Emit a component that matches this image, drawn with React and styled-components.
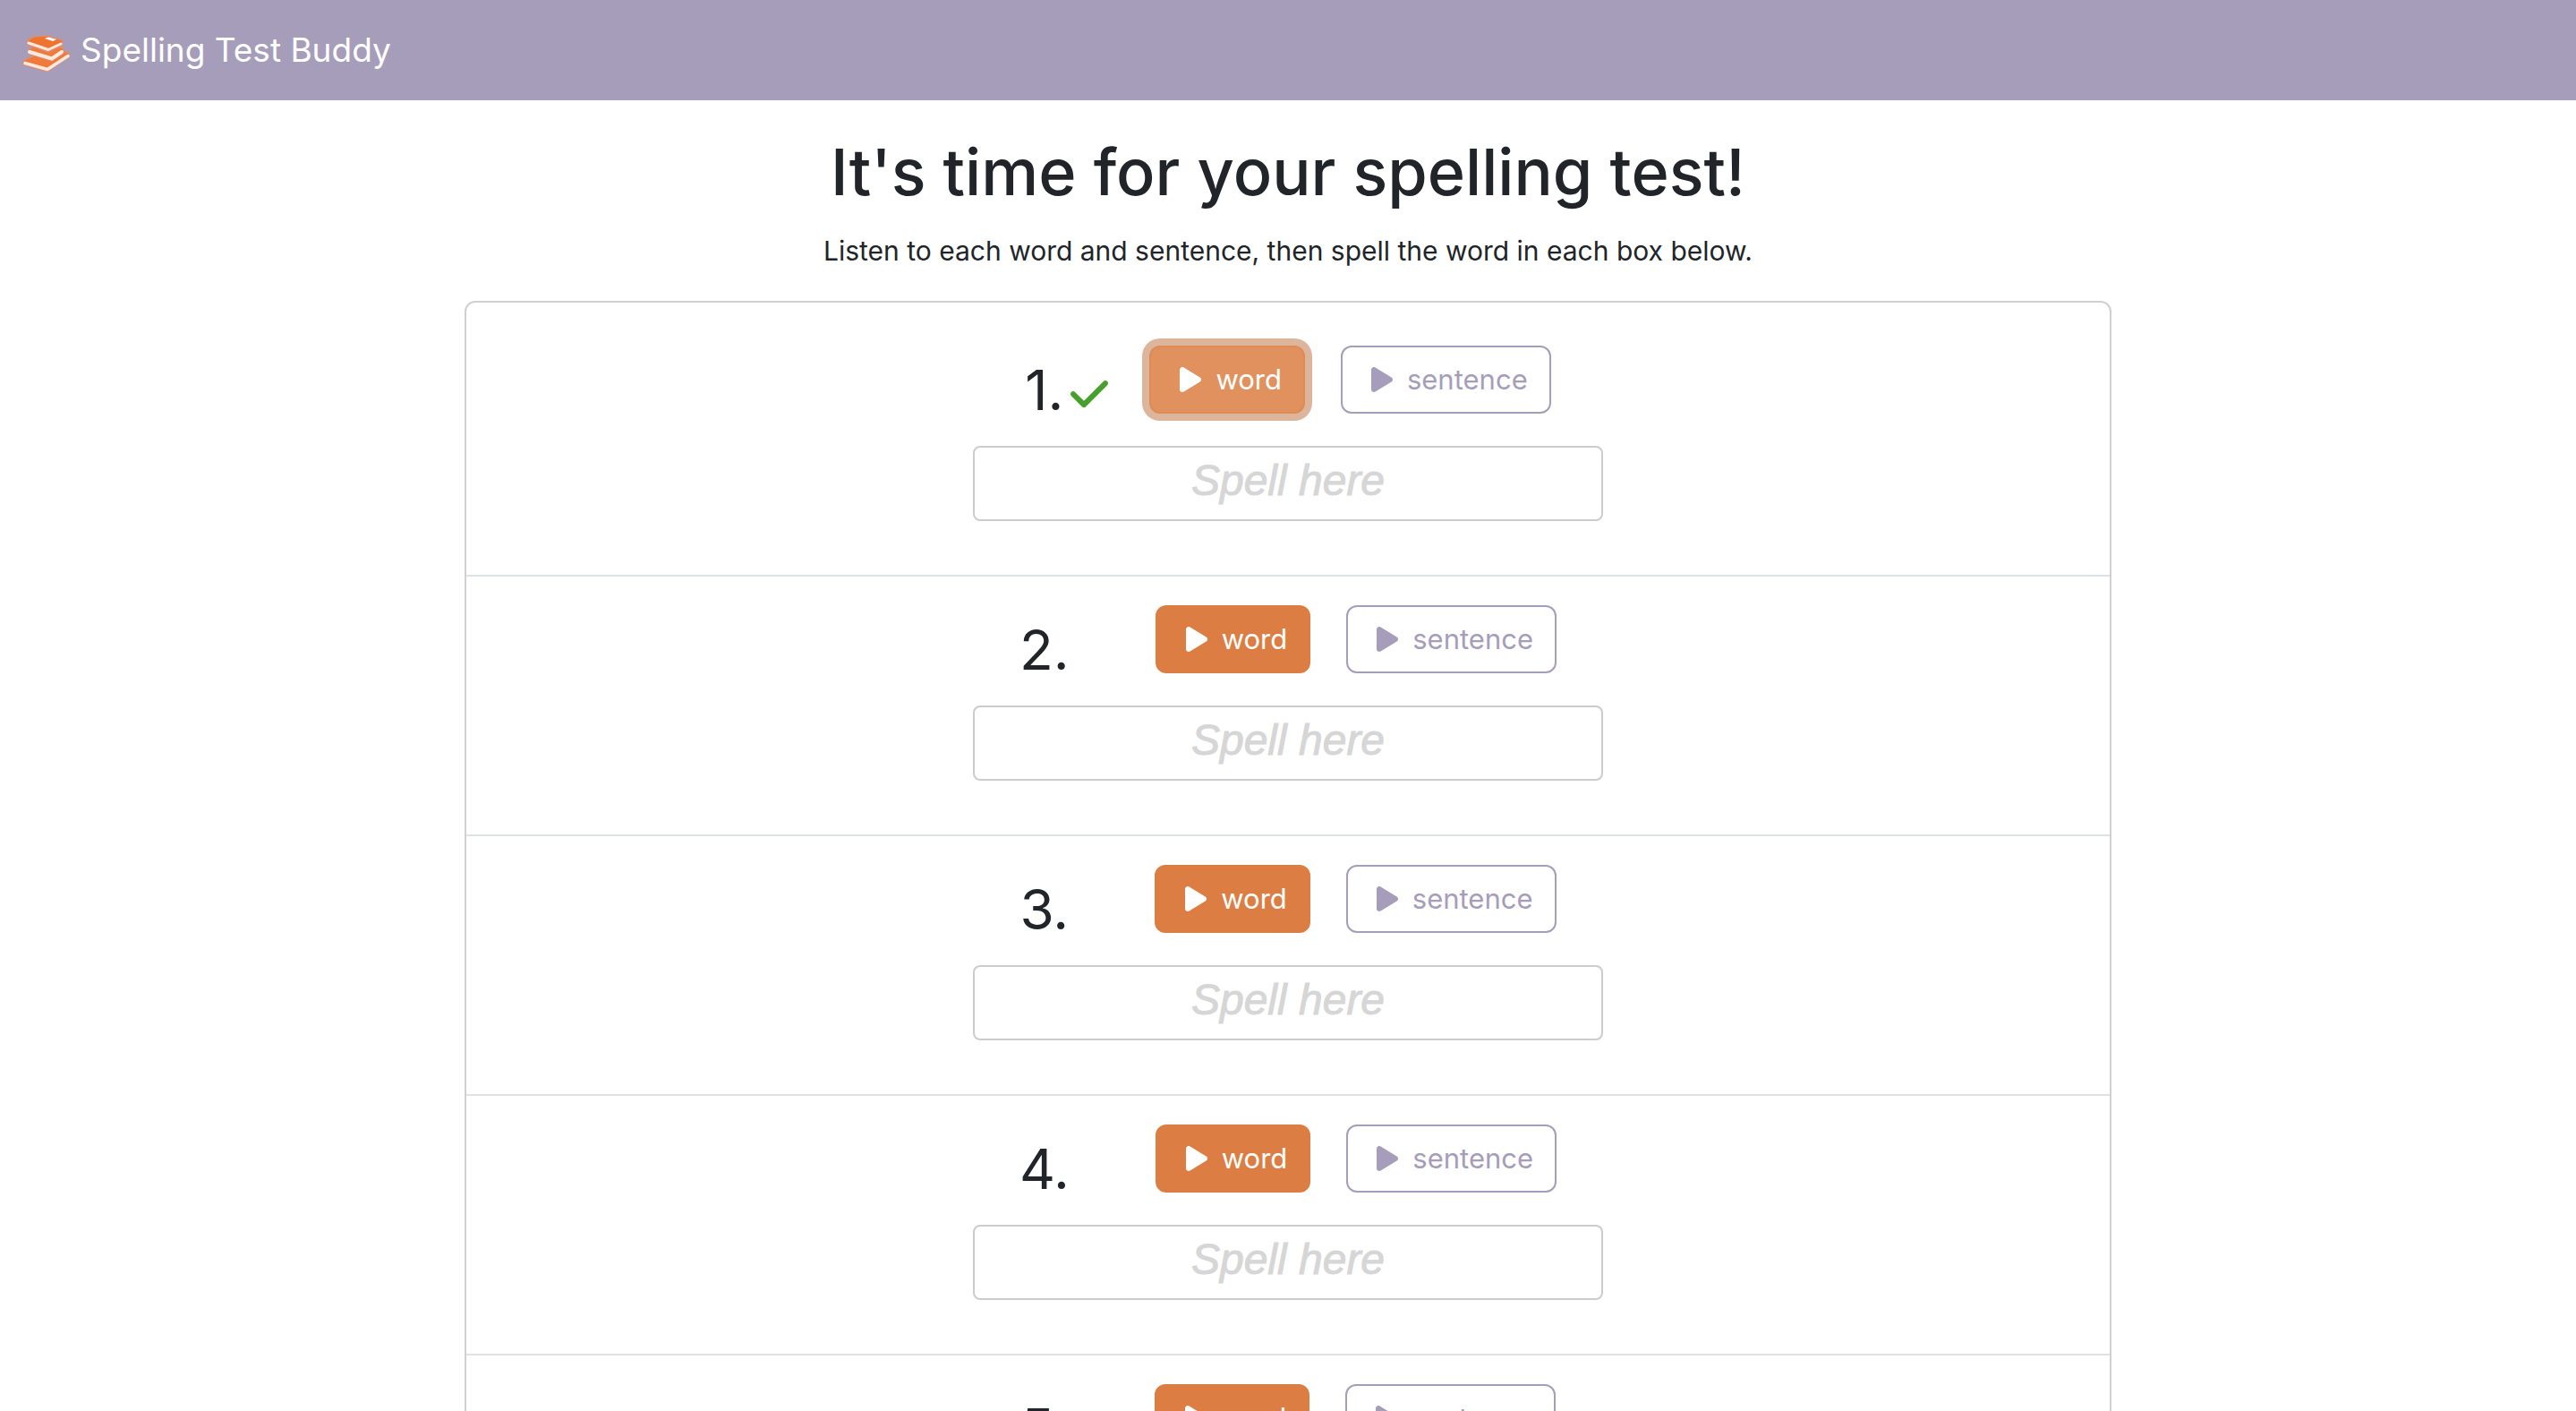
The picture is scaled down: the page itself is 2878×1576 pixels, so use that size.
import { useState } from "react";
import styled, { createGlobalStyle } from "styled-components";
import { FaCheck, FaPlay } from "react-icons/fa6";

const words = [1, 2, 3, 4, 5];

const Books = () => (
    <svg width="56" height="48" viewBox="0 0 56 48" fill="none" strokeLinejoin="round" strokeLinecap="round" aria-hidden="true">
        <path d="M2 32 L12 27 L46 21 L53 23 L53 28 L29 44 L2 36 Z" fill="#f0793c" stroke="#dd8d70" strokeWidth="1.5" />
        <path d="M4 34.5 L29 41.5 L52 26.5" stroke="#fdeadf" strokeWidth="3.5" />
        <path d="M8 20 L14 16 L42 16 L47 18 L46 24 L34 32 L8 24 Z" fill="#f0793c" stroke="#dd8d70" strokeWidth="1.5" />
        <path d="M9 22 L34 29.5 L45 22" stroke="#fdeadf" strokeWidth="4" />
        <path d="M7 9 L14 5 L28 4 L46 9 L45 15 L30 22 L7 14 Z" fill="#ee7432" stroke="#dd8d70" strokeWidth="1.5" />
        <path d="M8 12 L30 19.5 L44 13" stroke="#fdeadf" strokeWidth="3" />
        <path d="M26 7 L30 5.5 L39 8 L35 10 Z" fill="#ffffff" />
    </svg>
)

function SpellingRow({ number, done, focused }) {
    const [answer, setAnswer] = useState("");

    return (
        <Item>
            <Controls>
                <Label htmlFor={`word-${number}`}>{number}.</Label>
                <CheckSlot>{done && <FaCheck />}</CheckSlot>
                <Buttons>
                    <WordButton type="button" $focused={focused}>
                        <FaPlay />word
                    </WordButton>
                    <SentenceButton type="button">
                        <FaPlay />sentence
                    </SentenceButton>
                </Buttons>
            </Controls>
            <SpellInput
                id={`word-${number}`}
                type="text"
                placeholder="Spell here"
                autoComplete="off"
                value={answer}
                onChange={(e) => setAnswer(e.target.value)}
            />
        </Item>
    );
}

function App() {
    return (
        <>
            <GlobalStyle />
            <Navbar>
                <Brand href="#">
                    <Books />
                    Spelling Test Buddy
                </Brand>
            </Navbar>
            <Main>
                <Title>It's time for your spelling test!</Title>
                <Lead>Listen to each word and sentence, then spell the word in each box below.</Lead>
                <Card>
                    {words.map((n) => (
                        <SpellingRow key={n} number={n} done={n === 1} focused={n === 1} />
                    ))}
                </Card>
            </Main>
        </>
    );
}

const GlobalStyle = createGlobalStyle`
    * {
        box-sizing: border-box;
    }
    body {
        margin: 0;
        background: #fff;
        color: #212529;
        font-family: Inter, "Liberation Sans", sans-serif;
        font-size: 32px;
        line-height: 48px;
    }
`

const Navbar = styled.nav`
    display: flex;
    align-items: center;
    height: 112px;
    padding: 0 24px;
    background: #a69dbb;
`

const Brand = styled.a`
    display: flex;
    align-items: center;
    gap: 10px;
    color: #fff;
    font-size: 37px;
    text-decoration: none;
    svg {
        margin-top: 8px;
    }
`

const Main = styled.main`
    max-width: 1840px;
    margin: 0 auto;
    padding-top: 32px;
    text-align: center;
`

const Title = styled.h1`
    margin: 0 0 16px;
    font-size: 72px;
    font-weight: 500;
    line-height: 96px;
`

const Lead = styled.p`
    margin: 0 0 32px;
    font-size: 30px;
`

const Card = styled.ul`
    margin: 0;
    padding: 16px 0 0;
    border: 2px solid #d0d0d0;
    border-radius: 12px;
    list-style: none;
`

const Item = styled.li`
    display: flex;
    flex-direction: column;
    align-items: center;
    gap: 24px;
    padding: 32px 32px 60px;
    border-bottom: 2px solid #dee2e6;
    &:last-child {
        border-bottom: 0;
    }
`

const Controls = styled.div`
    display: flex;
    justify-content: center;
`

const Label = styled.label`
    padding-top: 12px;
    font-size: 62px;
    line-height: 76px;
`

const CheckSlot = styled.span`
    width: 96px;
    padding: 30px 0 0 8px;
    color: #48a02c;
    text-align: left;
    svg {
        display: block;
        width: 42px;
        height: 48px;
    }
`

const Buttons = styled.div`
    display: flex;
    align-items: flex-start;
    gap: 40px;
`

const Button = styled.button`
    display: flex;
    align-items: center;
    padding: 12px 24px;
    border: 2px solid;
    border-radius: 12px;
    font-family: inherit;
    font-size: 31px;
    line-height: 48px;
    cursor: pointer;
    svg {
        width: 24px;
        height: 32px;
        margin: 0 16px 0 8px;
    }
`

const WordButton = styled(Button)`
    border-color: ${(props) => (props.$focused ? "#df8b55" : "#dc7e43")};
    background: ${(props) => (props.$focused ? "#e0915e" : "#dc7e43")};
    box-shadow: ${(props) => (props.$focused ? "0 0 0 8px #ddb49c" : "none")};
    color: #fff;
`

const SentenceButton = styled(Button)`
    border-color: #a69dbb;
    background: transparent;
    color: #a69dbb;
`

const SpellInput = styled.input`
    width: 704px;
    max-width: 100%;
    height: 84px;
    padding: 0 8px 8px;
    border: 2px solid #ccc;
    border-radius: 8px;
    background: #fff;
    color: #212529;
    font-family: "Liberation Sans", Arial, sans-serif;
    font-size: 48px;
    text-align: center;
    &::placeholder {
        color: #d6d6d6;
        font-style: italic;
        opacity: 1;
        -webkit-text-stroke: 1px #d6d6d6;
    }
`

export default App;
